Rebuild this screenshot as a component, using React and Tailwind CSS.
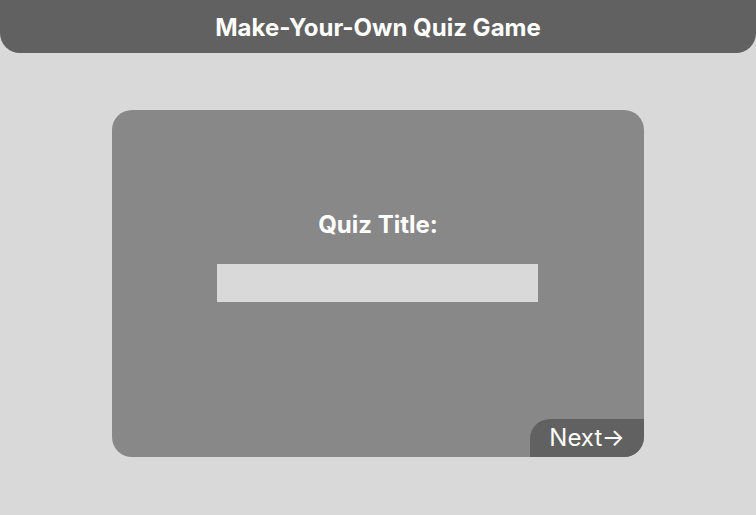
import React, { useState } from 'react';

export default function App() {
  const [title, setTitle] = useState('');

  return (
    <div className="min-h-screen w-full bg-[#d9d9d9] font-['Inter',sans-serif]">
      {/* ── Header ── */}
      <div className="h-[53px] bg-[#616161] rounded-b-[20px] flex items-center justify-center pt-[2px]">
        <h1 className="text-[24px] font-bold text-white leading-none">Make-Your-Own Quiz Game</h1>
      </div>

      {/* ── Body ── */}
      <div className="flex justify-center pt-[57px]">
        <div className="w-[532px] h-[347px] bg-[#888888] rounded-[20px] overflow-hidden flex flex-col">
          <label className="self-center mt-[100px] text-[24px] font-bold text-white leading-[29px]">Quiz Title:</label>
          <input
            value={title}
            onChange={e => setTitle(e.target.value)}
            className="ml-[105px] mt-[25px] w-[321px] h-[38px] bg-[#d9d9d9] outline-none px-2 text-lg"
          />
          <button className="mt-auto self-end w-[114px] h-[38px] bg-[#616161] rounded-tl-[20px] text-white text-[24px] leading-none flex items-center justify-center">
            Next→
          </button>
        </div>
      </div>
    </div>
  );
}
